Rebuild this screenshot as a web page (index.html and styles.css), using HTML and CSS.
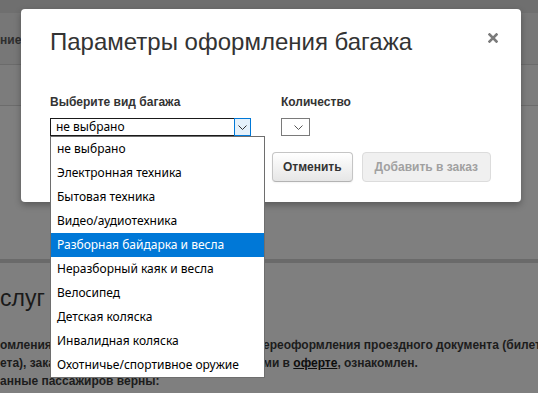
FILE: index.html
```html
<!DOCTYPE html>
<html lang="ru">
<head>
<meta charset="utf-8">
<title>Параметры оформления багажа</title>
<link rel="stylesheet" href="styles.css">
</head>
<body>
<div class="page">
  <div class="topbar"></div>
  <div class="tabs"><span class="tab-text">ние</span></div>
  <div class="subrow"></div>
  <div class="spacer"></div>
  <div class="thickline"></div>
  <h2 class="section-title">слуг</h2>
  <div class="terms">
    <div class="line"><span class="seg-left">омления : при</span><span class="seg-right">ереоформления проездного документа (билета</span></div>
    <div class="line"><span class="seg-left">ета), заказа</span><span class="seg-right">ми в <u>оферте</u>, ознакомлен.</span></div>
    <div class="line"><span class="seg-left">анные пассажиров верны:</span></div>
  </div>
</div>

<div class="modal">
  <div class="modal-header">
    <h1 class="modal-title">Параметры оформления багажа</h1>
    <span class="close" aria-label="Закрыть">
      <svg width="10" height="10" viewBox="0 0 10 10"><path d="M1.5 1.5 L8.5 8.5 M8.5 1.5 L1.5 8.5" stroke="#7b7b7b" stroke-width="2.6" stroke-linecap="square"/></svg>
    </span>
  </div>
  <div class="modal-body">
    <div class="fields">
      <div class="field field-type">
        <div class="label">Выберите вид багажа</div>
        <div class="select-wrap">
          <div class="select select-focused">
            <span class="select-value">не выбрано</span>
            <span class="select-arrow">
              <svg width="9" height="5" viewBox="0 0 9 5"><polyline points="0.5,0.5 4.5,4.5 8.5,0.5" fill="none" stroke="#333" stroke-width="1"/></svg>
            </span>
          </div>
          <ul class="dropdown">
            <li>не выбрано</li>
            <li>Электронная техника</li>
            <li>Бытовая техника</li>
            <li>Видео/аудиотехника</li>
            <li class="active">Разборная байдарка и весла</li>
            <li>Неразборный каяк и весла</li>
            <li>Велосипед</li>
            <li>Детская коляска</li>
            <li>Инвалидная коляска</li>
            <li>Охотничье/спортивное оружие</li>
          </ul>
        </div>
      </div>
      <div class="field field-qty">
        <div class="label">Количество</div>
        <div class="select select-small">
          <span class="select-value"></span>
          <svg width="9" height="5" viewBox="0 0 9 5"><polyline points="0.5,0.5 4.5,4.5 8.5,0.5" fill="none" stroke="#555" stroke-width="1"/></svg>
        </div>
      </div>
    </div>
  </div>
  <div class="modal-footer">
    <button class="btn btn-cancel">Отменить</button>
    <button class="btn btn-disabled" disabled>Добавить в заказ</button>
  </div>
</div>
</body>
</html>
```

FILE: styles.css
```css
* { box-sizing: border-box; }

html, body {
  margin: 0;
  padding: 0;
}

body {
  width: 538px;
  height: 393px;
  overflow: hidden;
  position: relative;
  background: #7f7f7f;
  font-family: "Liberation Sans", Arial, sans-serif;
  color: #1c1c1c;
}

/* ---------- dimmed background page ---------- */
.page {
  display: flex;
  flex-direction: column;
  overflow: hidden;
}

.topbar {
  height: 13px;
  background: #6f6f6f;
}

.tabs {
  height: 52px;
  background: #777777;
  border-bottom: 1px solid #6b6b6b;
  display: flex;
  align-items: center;
  padding-top: 3px;
}

.tab-text {
  font-weight: bold;
  font-size: 12px;
  color: #2e2e2e;
}

.subrow {
  height: 41px;
  background: #7c7c7c;
  border-bottom: 1px solid #6c6c6c;
}

.spacer {
  height: 153px;
}

.thickline {
  height: 4px;
  background: #6a6a6a;
}

.section-title {
  margin: 21px 0 0;
  font-size: 23px;
  line-height: 28px;
  font-weight: normal;
  color: #1a1a1a;
}

.terms {
  margin-top: 24px;
  font-size: 12px;
  font-weight: bold;
  line-height: 18px;
  color: #1c1c1c;
  overflow: hidden;
}

.line {
  display: flex;
  white-space: nowrap;
}

.seg-left {
  flex: 0 0 263px;
  width: 263px;
  overflow: hidden;
}

.seg-right {
  flex: 0 0 auto;
}

.seg-right u {
  color: #0d0d0d;
}

/* ---------- modal ---------- */
.modal {
  position: absolute;
  left: 21px;
  top: 9px;
  width: 500px;
  height: 193px;
  background: #fff;
  border-radius: 4px;
  box-shadow: 0 3px 7px rgba(0, 0, 0, 0.3);
  display: flex;
  flex-direction: column;
}

.modal-header {
  padding: 18px 23px 0 29px;
  display: flex;
  justify-content: space-between;
  align-items: flex-start;
}

.modal-title {
  margin: 0;
  font-size: 24px;
  line-height: 30px;
  font-weight: normal;
  color: #333;
}

.close {
  margin-top: 6px;
  display: flex;
}

.modal-body {
  padding: 38px 29px 0;
}

.fields {
  display: flex;
  gap: 30px;
}

.field {
  display: flex;
  flex-direction: column;
}

.label {
  font-size: 12px;
  font-weight: bold;
  line-height: 15px;
  color: #333;
  margin-bottom: 8px;
}

.select-wrap {
  position: relative;
}

.select {
  display: flex;
  align-items: center;
  height: 18px;
  font-family: "Noto Sans", "Open Sans", sans-serif;
  font-size: 12px;
  color: #000;
  background: #fff;
}

.select-focused {
  width: 201px;
  border: 1px solid #1a1a1a;
}

.select-value {
  flex: 1;
  padding-left: 5px;
  line-height: 16px;
}

.select-arrow {
  width: 17px;
  height: 18px;
  margin: -1px -1px -1px 0;
  border: 1px solid #0078d7;
  background: #e5f1fb;
  display: flex;
  align-items: center;
  justify-content: center;
}

.select-small {
  width: 29px;
  border: 1px solid #7a7a7a;
  padding-right: 6px;
}

.dropdown {
  position: absolute;
  left: 0;
  top: 100%;
  width: 215px;
  margin: 0;
  padding: 0;
  list-style: none;
  background: #fff;
  border: 1px solid #6e6e6e;
  font-family: "Noto Sans", "Open Sans", sans-serif;
  font-size: 12px;
  color: #000;
  z-index: 10;
}

.dropdown li {
  height: 24px;
  line-height: 24px;
  padding-left: 6px;
  white-space: nowrap;
}

.dropdown li.active {
  background: #0078d7;
  color: #fff;
}

.modal-footer {
  margin-top: 16px;
  padding: 0 30px 20px 0;
  display: flex;
  justify-content: flex-end;
  gap: 9px;
}

.btn {
  height: 30px;
  padding: 0 12px;
  font-family: "Liberation Sans", Arial, sans-serif;
  font-size: 12px;
  font-weight: bold;
  color: #333;
  background: linear-gradient(#ffffff, #e6e6e6);
  border: 1px solid #c5c5c5;
  border-bottom-color: #b3b3b3;
  border-radius: 4px;
  box-shadow: inset 0 1px 0 rgba(255, 255, 255, 0.2), 0 1px 2px rgba(0, 0, 0, 0.05);
}

.btn-cancel {
  padding: 0 10px;
}

.btn-disabled {
  color: #a0a0a0;
  background: #f0f0f0;
  border-color: #dcdcdc;
  box-shadow: none;
}
```
